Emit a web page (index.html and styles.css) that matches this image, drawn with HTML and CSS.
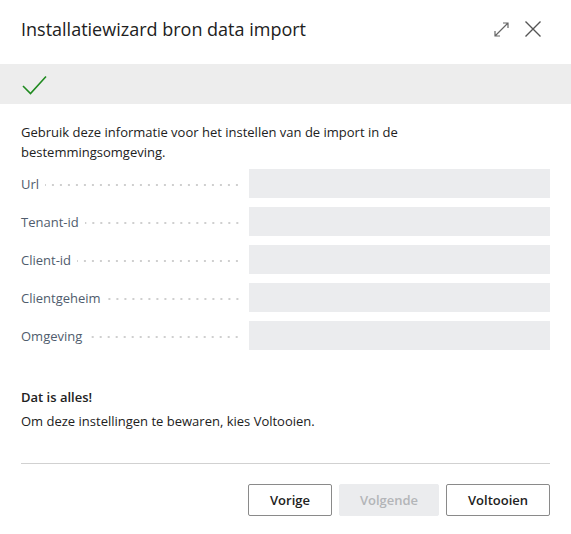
FILE: index.html
```html
<!DOCTYPE html>
<html lang="nl">
<head>
<meta charset="utf-8">
<title>Installatiewizard bron data import</title>
<link rel="stylesheet" href="styles.css">
</head>
<body>
<div class="dialog">
  <header class="header">
    <h1 class="title">Installatiewizard bron data import</h1>
    <div class="actions">
      <svg class="icon" width="17" height="17" viewBox="0 0 17 17" aria-hidden="true">
        <path d="M2 15 L15 2 M10 2 H15 V7 M2 10 V15 H7" fill="none" stroke="#666" stroke-width="1.2"/>
      </svg>
      <svg class="icon" width="18" height="18" viewBox="0 0 18 18" aria-hidden="true">
        <path d="M1.5 1.5 L16.5 16.5 M16.5 1.5 L1.5 16.5" fill="none" stroke="#555" stroke-width="1.4"/>
      </svg>
    </div>
  </header>
  <div class="band">
    <svg width="25" height="20" viewBox="0 0 25 20" aria-hidden="true">
      <path d="M1 11 L8.5 18.5 L24 1.5" fill="none" stroke="#1f8a1f" stroke-width="1.6"/>
    </svg>
  </div>
  <main class="content">
    <p class="intro">Gebruik deze informatie voor het instellen van de import in de bestemmingsomgeving.</p>
    <div class="fields">
      <div class="field"><span class="label">Url</span><span class="leader"></span><span class="box"></span></div>
      <div class="field"><span class="label">Tenant-id</span><span class="leader"></span><span class="box"></span></div>
      <div class="field"><span class="label">Client-id</span><span class="leader"></span><span class="box"></span></div>
      <div class="field"><span class="label">Clientgeheim</span><span class="leader"></span><span class="box"></span></div>
      <div class="field"><span class="label">Omgeving</span><span class="leader"></span><span class="box"></span></div>
    </div>
    <p class="done">Dat is alles!</p>
    <p class="hint">Om deze instellingen te bewaren, kies Voltooien.</p>
  </main>
  <footer class="footer">
    <button class="btn btn-prev">Vorige</button>
    <button class="btn btn-next" disabled>Volgende</button>
    <button class="btn btn-finish">Voltooien</button>
  </footer>
</div>
</body>
</html>
```

FILE: styles.css
```css
* { box-sizing: border-box; }
html, body { margin: 0; padding: 0; background: #fff; }
body {
  font-family: "Open Sans", "Noto Sans", sans-serif;
  color: #212121;
  width: 571px;
  height: 534px;
  overflow: hidden;
}
.dialog { display: flex; flex-direction: column; }
.header {
  height: 64px;
  display: flex;
  align-items: center;
  justify-content: space-between;
  padding: 0 29px 6px 21px;
}
.title {
  margin: 0;
  font-size: 18px;
  font-weight: 400;
  color: #212121;
}
.actions { display: flex; gap: 14px; align-items: center; }
.icon { display: block; }
.band {
  height: 40px;
  background: #ededed;
  display: flex;
  align-items: center;
  padding-left: 22px;
}
.band svg { display: block; margin-top: 2px; }
.content { padding: 0 21px; }
.intro {
  margin: 18px 0 0 0;
  font-size: 13px;
  line-height: 20px;
  color: #212121;
  max-width: 420px;
}
.fields {
  margin-top: 7px;
  display: flex;
  flex-direction: column;
  gap: 9px;
}
.field {
  display: flex;
  align-items: center;
  height: 29px;
}
.label {
  font-size: 13px;
  color: #505c6d;
  white-space: nowrap;
  padding-right: 6px;
}
.leader {
  flex: 1;
  height: 2px;
  margin-right: 8px;
  margin-top: 3px;
  background-image: radial-gradient(circle, #cfcfcf 0.9px, transparent 1.1px);
  background-size: 8px 2px;
  background-position: right center;
  background-repeat: repeat-x;
}
.box {
  width: 301px;
  height: 29px;
  background: #ebecee;
  flex: none;
}
.done {
  margin: 37px 0 0 0;
  font-size: 13px;
  font-weight: 600;
  line-height: 20px;
}
.hint {
  margin: 4px 0 0 0;
  font-size: 13px;
  line-height: 20px;
}
.footer {
  margin: 32px 21px 0 21px;
  border-top: 1px solid #d1d1d1;
  padding-top: 20px;
  display: flex;
  justify-content: flex-end;
  gap: 7px;
}
.btn {
  height: 32px;
  font-family: inherit;
  font-size: 13px;
  font-weight: 600;
  background: #fff;
  color: #212121;
  border: 1px solid #8a8a8a;
  border-radius: 2px;
  padding: 0;
}
.btn-prev { width: 84px; }
.btn-next {
  width: 100px;
  background: #ebecee;
  border-color: #ebecee;
  color: #b3b5b8;
}
.btn-finish { width: 104px; }
```
